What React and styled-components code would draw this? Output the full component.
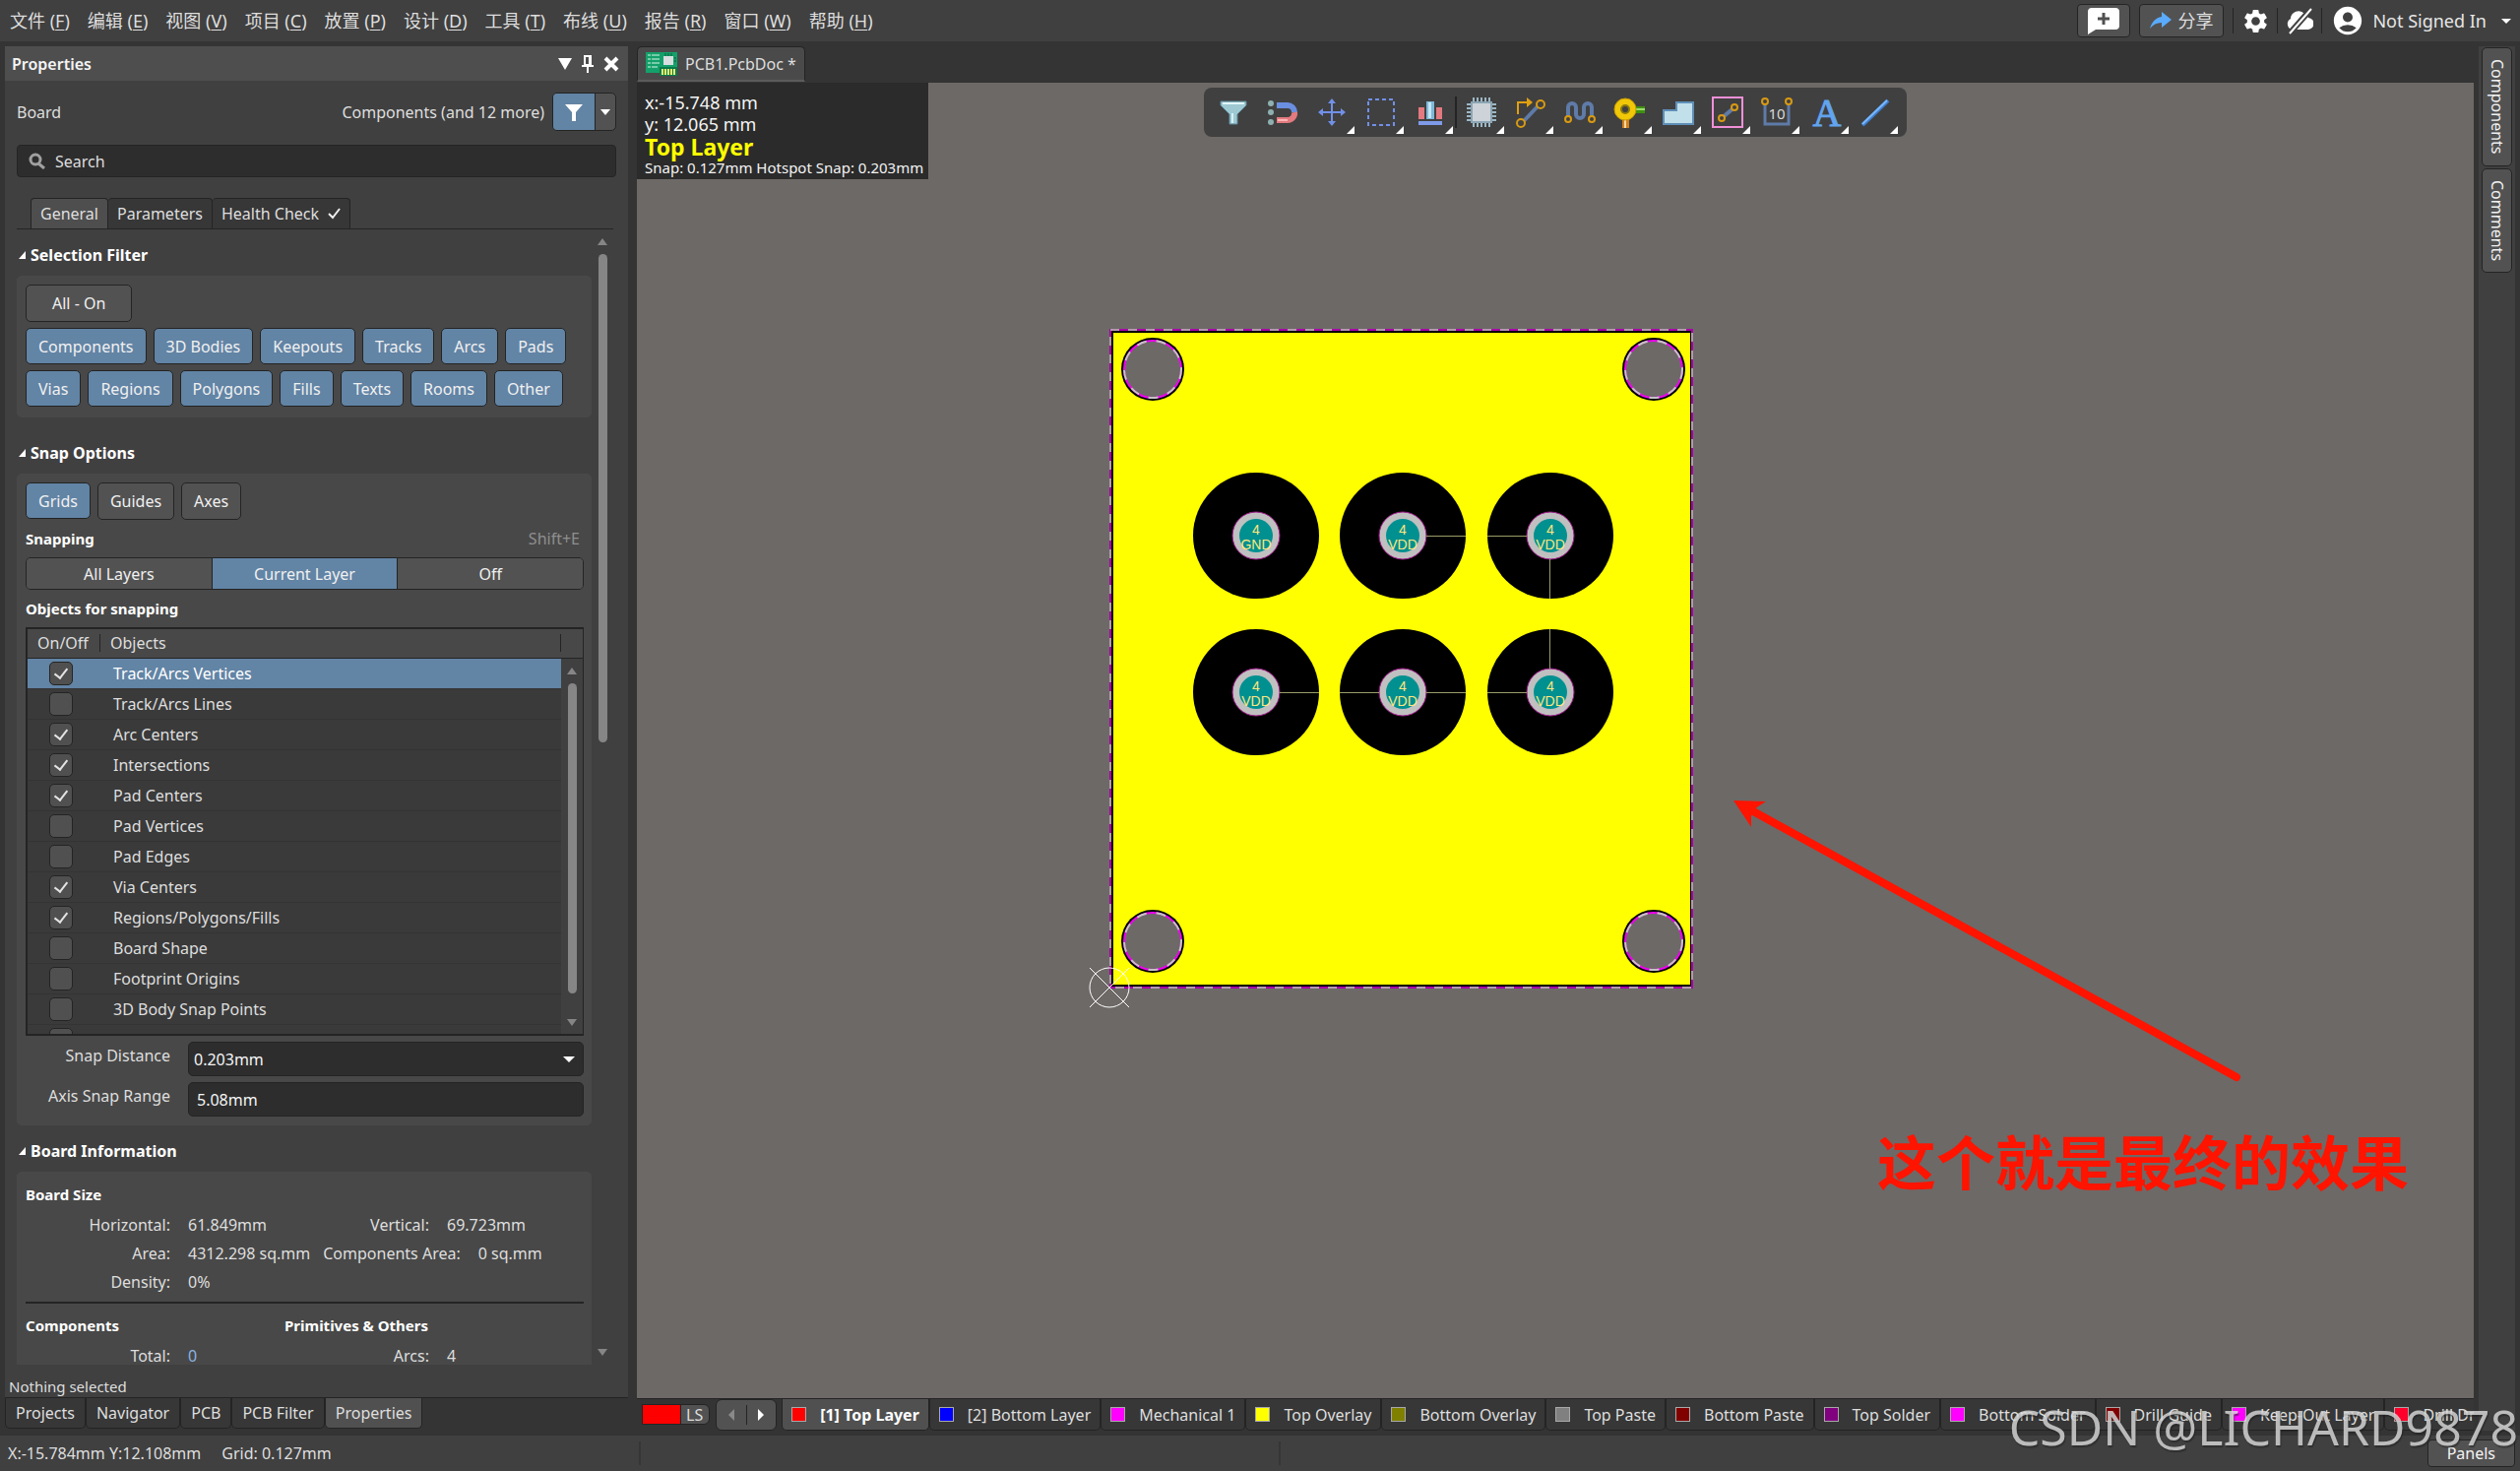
import React from "react";
import styled, { createGlobalStyle, css } from "styled-components";
import { MdSettings, MdAccountCircle } from "react-icons/md";

const colors = {
  frame: "#343434",
  panel: "#404040",
  group: "#484848",
  raised: "#525252",
  field: "#2d2d2d",
  line: "#242424",
  accent: "#6284a5",
  text: "#dedede",
  scroll: "#868686",
  canvas: "#6d6967"
};

const GlobalStyle = createGlobalStyle`
  * {
    box-sizing: border-box;
  }

  body {
    margin: 0;
    background: ${colors.frame};
    color: ${colors.text};
    font-family: "Noto Sans", "Noto Sans CJK SC", sans-serif;
    font-size: 16px;
    line-height: 24px;
  }

  button, input, select {
    font: inherit;
    color: inherit;
  }

  button {
    margin: 0;
    padding: 0;
    border: 0;
    background: none;
    white-space: nowrap;
  }

  svg {
    display: block;
  }
`;

const Page = styled.div`
  display: flex;
  flex-direction: column;
  height: 100vh;
  overflow: hidden;
  position: relative;
`;

/* ---------- menu bar ---------- */

const MenuBar = styled.header`
  display: flex;
  flex: 0 0 42px;
  align-items: center;
  justify-content: space-between;
  background: ${colors.panel};
`;

const MenuList = styled.nav`
  display: flex;
  gap: 18px;
  padding-left: 10px;
`;

const MenuItem = styled.button`
  font-size: 18px;

  u {
    text-decoration-thickness: 1px;
    text-underline-offset: 2px;
  }
`;

const MenuActions = styled.div`
  display: flex;
  align-items: center;
  gap: 9px;
  padding-right: 9px;
`;

const ActionButton = styled.button`
  display: flex;
  align-items: center;
  justify-content: center;
  gap: 6px;
  height: 34px;
  padding: 0 10px;
  border: 1px solid ${colors.line};
  border-radius: 4px;
  background: ${colors.raised};
  font-size: 18px;
`;

const IconButton = styled.button`
  display: flex;
  align-items: center;
  justify-content: center;
  width: 34px;
  height: 34px;
  margin: 0 -4px;
  color: #fff;
`;

const ActionDivider = styled.span`
  width: 1px;
  height: 26px;
  background: ${colors.line};
`;

const Account = styled.button`
  display: flex;
  align-items: center;
  gap: 8px;
  font-size: 18px;
  color: #e6e6e6;

  span {
    padding-right: 7px;
  }
`;

const Caret = styled.i`
  width: 0;
  height: 0;
  border: ${p => p.$size || 5}px solid transparent;
  border-bottom-width: 0;
  border-top: ${p => (p.$size || 5) + (p.$tall || 0)}px solid
    ${p => p.$color || "#fff"};
`;

/* ---------- work area ---------- */

const Main = styled.main`
  display: flex;
  flex: 1;
  min-height: 0;
`;

const Panel = styled.aside`
  display: flex;
  flex: 0 0 633px;
  flex-direction: column;
  margin: 5px 9px 7px 5px;
`;

const PanelHeader = styled.div`
  display: flex;
  flex: 0 0 35px;
  align-items: center;
  gap: 10px;
  padding: 0 9px 0 7px;
  background: #4e4e4e;
`;

const PanelTitle = styled.h1`
  flex: 1;
  margin: 0;
  font-size: 16px;
  font-weight: 600;
  color: #f4f4f4;
`;

const PanelBody = styled.div`
  display: flex;
  flex: 1;
  flex-direction: column;
  min-height: 0;
  padding: 12px 12px 0;
  background: ${colors.panel};
`;

const ObjectRow = styled.div`
  display: flex;
  flex: 0 0 39px;
  align-items: center;
  justify-content: space-between;
`;

const FilterControl = styled.div`
  display: flex;
  align-items: center;
  gap: 8px;
`;

const SplitButton = styled.div`
  display: flex;
  height: 39px;
  border: 1px solid ${colors.line};
  border-radius: 5px;
  overflow: hidden;
  background: ${colors.raised};
`;

const SplitPart = styled.button`
  display: flex;
  align-items: center;
  justify-content: center;
  width: ${p => (p.$main ? 43 : 20)}px;
  background: ${p => (p.$main ? colors.accent : "none")};
  border-right: ${p => (p.$main ? `1px solid ${colors.line}` : "0")};
`;

const SearchBox = styled.label`
  display: flex;
  flex: 0 0 33px;
  align-items: center;
  gap: 10px;
  margin: 14px 0 21px;
  padding: 0 11px;
  border: 1px solid ${colors.line};
  border-radius: 4px;
  background: ${colors.field};

  input {
    flex: 1;
    border: 0;
    padding: 0;
    background: none;
    outline: none;
  }

  input::placeholder {
    color: ${colors.text};
    opacity: 1;
  }
`;

const TabList = styled.div`
  display: flex;
  flex: 0 0 32px;
  margin-right: 3px;
  padding-left: 14px;
  border-bottom: 1px solid ${colors.line};
`;

const Tab = styled.button`
  display: flex;
  align-items: center;
  gap: 9px;
  padding: 0 9px;
  border: 1px solid ${colors.line};
  border-bottom: 0;
  border-radius: 4px 4px 0 0;
  background: ${p => (p.$active ? "#4e4e4e" : "#373737")};

  & + & {
    border-left: 0;
  }
`;

const ScrollArea = styled.div`
  display: flex;
  flex: 1;
  gap: 6px;
  min-height: 0;
  padding-right: 9px;
`;

const ScrollContent = styled.div`
  flex: 1;
  overflow: hidden;
`;

const ScrollBar = styled.div`
  display: flex;
  flex: 0 0 ${p => p.$width || 9}px;
  flex-direction: column;
  align-items: center;
  padding: 9px 0;
`;

const ScrollTrack = styled.div`
  flex: 1;
  align-self: stretch;
  padding: 9px 0;
`;

const ScrollThumb = styled.div`
  width: 9px;
  height: ${p => p.$height};
  margin: 0 auto;
  border-radius: 5px;
  background: ${colors.scroll};
`;

const ScrollArrow = styled(Caret).attrs({ $size: 5, $tall: 2, $color: colors.scroll })`
  transform: ${p => (p.$up ? "rotate(180deg)" : "none")};
`;

const SectionTitle = styled.h2`
  display: flex;
  align-items: center;
  gap: 5px;
  margin: 14px 0 9px;
  padding-left: 2px;
  font-size: 16px;
  font-weight: 700;
  line-height: 24px;
  color: #fff;
`;

const Fold = styled.span`
  width: 0;
  height: 0;
  border-left: 7px solid transparent;
  border-bottom: 8px solid #fff;
`;

const Group = styled.section`
  padding: 9px 8px 9px 9px;
  margin-bottom: ${p => p.$after || 0}px;
  border-radius: 5px;
  background: ${colors.group};
`;

const ChipRow = styled.div`
  display: flex;
  gap: 7px;
  margin-bottom: ${p => (p.$last ? 2 : 6)}px;
`;

const Chip = styled.button`
  height: ${p => (p.$on ? 37 : 38)}px;
  padding: 0 ${p => (p.$wide ? 26 : 12)}px;
  border: 1px solid ${colors.line};
  border-radius: 5px;
  background: ${p => (p.$on ? colors.accent : colors.raised)};
  color: #f0f0f0;
`;

const SubTitle = styled.h3`
  display: flex;
  justify-content: space-between;
  flex: 1;
  margin: ${p => p.$margin || "7px 0"};
  font-size: 15px;
  font-weight: 700;
  line-height: 24px;
  color: #fff;

  small {
    padding-right: 4px;
    font-size: 16px;
    font-weight: 400;
    color: #8f8f8f;
  }
`;

const Segmented = styled.div`
  display: flex;
  height: 33px;
  border: 1px solid ${colors.line};
  border-radius: 5px;
  overflow: hidden;
`;

const Segment = styled.button`
  flex: 1;
  background: ${p => (p.$on ? colors.accent : colors.raised)};
  color: #f0f0f0;

  & + & {
    border-left: 1px solid ${colors.line};
  }
`;

const ListFrame = styled.div`
  border: 2px solid ${colors.line};
  border-right-width: 1px;
`;

const ListViewport = styled.div`
  display: flex;
  height: 411px;
  overflow: hidden;
  background: #3a3a3a;
`;

const ListTable = styled.table`
  flex: 1;
  align-self: flex-start;
  border-collapse: collapse;

  th {
    height: 29px;
    padding: 0 0 0 10px;
    border-bottom: 1px solid ${colors.line};
    background: ${colors.group};
    font-weight: 400;
    text-align: left;
  }

  th:first-child {
    width: 74px;
    background: linear-gradient(${colors.line}, ${colors.line}) right center / 1px 18px
      no-repeat ${colors.group};
  }

  th:last-child {
    background: linear-gradient(${colors.line}, ${colors.line}) right center / 1px 18px
      no-repeat ${colors.group};
  }
`;

const ListRow = styled.tr`
  height: 31px;
  background: ${p => (p.$selected ? colors.accent : "none")};
  color: ${p => (p.$selected ? "#fff" : colors.text)};

  td {
    padding: 0 0 0 13px;
    border-bottom: 1px solid #343434;
  }

  td:first-child {
    padding-left: 22px;
  }

  label {
    display: block;
  }
`;

const CheckBox = styled.input`
  appearance: none;
  display: flex;
  justify-content: center;
  width: 24px;
  height: 24px;
  margin: 0;
  border: 1px solid ${colors.line};
  border-radius: 5px;
  background: #505050;

  &:checked::after {
    content: "";
    width: 6px;
    height: 11px;
    margin-top: 3px;
    border: solid #e4e4e4;
    border-width: 0 2px 2px 0;
    transform: rotate(38deg);
  }
`;

const ListScroll = styled.div`
  display: flex;
  flex: 0 0 22px;
  flex-direction: column;
  background: ${colors.panel};

  &::before {
    content: "";
    flex: 0 0 29px;
    border-bottom: 1px solid ${colors.line};
    background: ${colors.group};
  }
`;

const Field = styled.div`
  display: grid;
  grid-template-columns: 147px 1fr;
  gap: 18px;
  margin-top: 6px;

  > label {
    padding-top: 2px;
    text-align: right;
  }
`;

const inputLook = css`
  width: 100%;
  height: 35px;
  padding: 0 8px;
  border: 1px solid ${colors.line};
  border-radius: 5px;
  background: ${colors.field};
  color: #f4f4f4;
  outline: none;
`;

const TextInput = styled.input`
  ${inputLook}
`;

const SelectBox = styled.div`
  position: relative;

  select {
    ${inputLook}
    padding: 0 5px;
    appearance: none;
  }

  ${Caret} {
    position: absolute;
    right: 9px;
    top: 15px;
    pointer-events: none;
  }
`;

const Stats = styled.dl`
  display: flex;
  margin: 0;
  line-height: 29px;

  dt {
    min-width: 147px;
    padding-left: 13px;
    text-align: right;
  }

  dd {
    min-width: 116px;
    margin: 0;
    padding-left: 18px;
  }
`;

const CountLink = styled.a`
  color: #8ab4e0;
  text-decoration: none;
`;

const Rule = styled.hr`
  height: 2px;
  margin: 5px 0 10px;
  border: 0;
  background: ${colors.line};
`;

const HeadingPair = styled.div`
  display: grid;
  grid-template-columns: 263px 1fr;
`;

const PanelFooter = styled.p`
  flex: 0 0 33px;
  margin: 0 -8px;
  padding-top: 12px;
  font-size: 15px;
  line-height: 20px;
`;

const PanelTabs = styled.div`
  display: flex;
  flex: 0 0 32px;
  border-top: 1px solid ${colors.line};
`;

const PanelTab = styled.button`
  padding: 0 10px;
  border: 1px solid ${colors.line};
  border-top: 0;
  border-radius: 0 0 5px 5px;
  background: ${p => (p.$active ? "#505050" : "#373737")};
`;

/* ---------- editor ---------- */

const Editor = styled.section`
  display: flex;
  flex: 1;
  flex-direction: column;
  min-width: 0;
`;

const DocTabs = styled.div`
  display: flex;
  flex: 0 0 42px;
  padding: 5px 0 1px;
`;

const DocTab = styled.button`
  display: flex;
  align-items: center;
  gap: 8px;
  padding: 0 8px;
  border: 1px solid ${colors.line};
  border-bottom: 2px solid #5c5c5c;
  border-radius: 5px 5px 0 0;
  background: #4a4a4a;
`;

const Canvas = styled.div`
  position: relative;
  flex: 1;
  min-height: 0;
  overflow: hidden;
  background: ${colors.canvas};

  > svg {
    width: 100%;
    height: 100%;
  }
`;

const HeadsUp = styled.div`
  position: absolute;
  left: 0;
  top: 0;
  padding: 9px 5px 3px 8px;
  background: #2b2b2b;
  color: #f4f4f4;
  font-size: 18px;
  line-height: 22px;

  p {
    margin: 0;
  }

  strong {
    display: block;
    font-size: 23px;
    line-height: 25px;
    color: #ffff00;
  }

  small {
    display: block;
    font-size: 15px;
    line-height: 17px;
  }
`;

const ToolBar = styled.div`
  position: absolute;
  left: 576px;
  top: 5px;
  display: flex;
  align-items: center;
  height: 50px;
  padding: 0 7px 0 5px;
  border-radius: 8px;
  background: ${colors.panel};
`;

const Tool = styled.button`
  position: relative;
  display: flex;
  align-items: center;
  justify-content: center;
  width: 50px;
  height: 50px;

  &::after {
    content: "";
    display: ${p => (p.$menu ? "block" : "none")};
    position: absolute;
    right: 2px;
    bottom: 3px;
    border-left: 8px solid transparent;
    border-bottom: 8px solid #fff;
  }
`;

const ToolDivider = styled.span`
  width: 2px;
  height: 32px;
  background: ${colors.line};
`;

const LayerBar = styled.div`
  display: flex;
  flex: 0 0 38px;
  padding: 0 0 5px 5px;
  border-top: 1px solid ${colors.line};
  overflow: hidden;
`;

const LayerSet = styled.button`
  display: flex;
  flex: none;
  height: 21px;
  margin: 5px 6px 0 0;
  border: 1px solid ${colors.line};
  border-radius: 0 6px 6px 0;
  background: ${colors.raised};
  line-height: 20px;

  &::before {
    content: "";
    width: 38px;
    align-self: stretch;
    margin-right: 5px;
    border-right: 1px solid ${colors.line};
    background: #ff0000;
  }

  span {
    padding-right: 6px;
  }
`;

const LayerNav = styled.div`
  display: flex;
  flex: none;
  align-items: center;
  width: 62px;
  margin-right: 5px;
  border: 1px solid ${colors.line};
  border-radius: 6px;
  background: ${colors.raised};

  button {
    display: flex;
    flex: 1;
    justify-content: center;
  }

  button + button {
    border-left: 1px solid ${colors.line};
    padding: 4px 0;
  }
`;

const LayerTab = styled.button`
  display: flex;
  flex: none;
  align-items: center;
  gap: 14px;
  padding: 0 9px;
  border: 1px solid ${colors.line};
  border-top: 0;
  border-radius: 0 0 5px 5px;
  background: ${p => (p.$active ? "#505050" : "#373737")};
  font-weight: ${p => (p.$active ? 700 : 400)};
  color: ${p => (p.$active ? "#fff" : colors.text)};
`;

const Swatch = styled.span`
  width: 15px;
  height: 15px;
  border: 1px solid #a8a8a8;
  background: ${p => p.$color};
`;

const SideStrip = styled.aside`
  display: flex;
  flex: 0 0 37px;
  flex-direction: column;
  gap: 2px;
  margin: 5px 5px 5px;
  padding: 1px 3px;
  background: ${colors.panel};
`;

const SideTab = styled.button`
  display: flex;
  align-items: center;
  padding: 11px 2px;
  border: 1px solid ${colors.line};
  border-radius: 5px;
  background: ${colors.raised};
  color: #f0f0f0;
  writing-mode: vertical-rl;
`;

/* ---------- status bar ---------- */

const StatusBar = styled.footer`
  display: flex;
  flex: 0 0 36px;
  align-items: center;
  padding: 0 5px 0 8px;
  background: ${colors.panel};
`;

const StatusText = styled.div`
  display: flex;
  flex: 0 0 641px;
  gap: 21px;
`;

const StatusSlot = styled.div`
  flex: ${p => (p.$grow ? "1" : "0 0 650px")};
  height: 24px;
  border-left: 2px solid #363636;
`;

const PanelsButton = styled.button`
  height: 28px;
  padding: 0 19px;
  border: 1px solid ${colors.line};
  border-radius: 4px;
  background: ${colors.raised};
  color: #f4f4f4;
`;

const Watermark = styled.div`
  position: absolute;
  right: 2px;
  bottom: 15px;
  font-size: 50px;
  line-height: 60px;
  color: rgba(222, 222, 222, 0.8);
  text-shadow: 1px 2px 1px rgba(30, 30, 30, 0.5);
  pointer-events: none;
  white-space: nowrap;
`;

/* ---------- icons ---------- */

const Icon = ({ w = 32, h = 32, children, ...rest }) => (
  <svg width={w} height={h} viewBox={`0 0 ${w} ${h}`} fill="none" aria-hidden="true" {...rest}>
    {children}
  </svg>
);

const tools = [
  {
    name: "Filter",
    art: (
      <>
        <path d="M3 5h26v4l-9 9v10h-8V18L3 9z" fill="#9ec9d3" stroke="#5e8a9a" />
        <path d="M5 6h22v2H5z" fill="#e4f6fa" />
        <path d="M14 17h2v10h-2z" fill="#d6f0f5" />
      </>
    )
  },
  {
    name: "Snapping",
    art: (
      <>
        <circle cx="4" cy="7" r="3" fill="#8fb0b0" />
        <circle cx="4" cy="16" r="3" fill="#8fb0b0" />
        <circle cx="4" cy="26" r="3" fill="#8fb0b0" />
        <path d="M10 9h11a7 7 0 0 1 7 7" stroke="#6b8fe0" strokeWidth="6" />
        <path d="M10 24h11a7 7 0 0 0 7-8" stroke="#e27a7f" strokeWidth="6" />
        <path d="M11 24h10" stroke="#ffb5b5" strokeWidth="2" />
      </>
    )
  },
  {
    name: "Move",
    menu: true,
    art: (
      <>
        <path d="M16 5v22M5 16h22" stroke="#7190e8" strokeWidth="2" />
        <path d="M16 2l4 5h-8zM16 30l4-5h-8zM2 16l5-4v8zM30 16l-5-4v8z" fill="#7190e8" />
      </>
    )
  },
  {
    name: "Select",
    menu: true,
    art: <rect x="3" y="3" width="26" height="26" stroke="#7190e8" strokeWidth="2" strokeDasharray="4 3" />
  },
  {
    name: "Align",
    menu: true,
    art: (
      <>
        <rect x="4" y="11" width="6" height="12" fill="#e27a7f" />
        <rect x="12" y="5" width="8" height="18" fill="#7fb8d8" />
        <rect x="14" y="6" width="3" height="16" fill="#c4e6f4" />
        <rect x="22" y="11" width="6" height="12" fill="#e27a7f" />
        <rect x="4" y="25" width="24" height="4" fill="#7f9be8" />
      </>
    )
  },
  {
    name: "Component",
    menu: true,
    divider: true,
    art: (
      <>
        <path
          d="M8 1v30M12 1v30M16 1v30M20 1v30M24 1v30M1 8h30M1 12h30M1 16h30M1 20h30M1 24h30"
          stroke="#9db8c4"
          strokeWidth="2"
        />
        <rect x="5" y="5" width="22" height="22" fill="#8ba5b4" />
        <rect x="7" y="7" width="18" height="18" fill="#cdd3d8" />
      </>
    )
  },
  {
    name: "Route",
    menu: true,
    art: (
      <>
        <path d="M8 26L25 8" stroke="#5f7ba8" strokeWidth="4" />
        <path d="M3 18V6h12" stroke="#e0a010" strokeWidth="2" />
        <path d="M12 1l6 5-6 5z" fill="#e0a010" />
        <circle cx="26" cy="8" r="4" fill="#404040" stroke="#d89a12" strokeWidth="2" />
        <circle cx="6" cy="27" r="4" fill="#404040" stroke="#d89a12" strokeWidth="2" />
      </>
    )
  },
  {
    name: "Length tuning",
    menu: true,
    art: (
      <>
        <path
          d="M4 20V11a4 4 0 0 1 8 0v7a4 4 0 0 0 8 0v-7a4 4 0 0 1 8 0v9"
          stroke="#5f7ba8"
          strokeWidth="4"
        />
        <circle cx="4" cy="23" r="3" fill="#404040" stroke="#d89a12" strokeWidth="2" />
        <circle cx="28" cy="23" r="3" fill="#404040" stroke="#d89a12" strokeWidth="2" />
      </>
    )
  },
  {
    name: "Via",
    menu: true,
    art: (
      <>
        <path d="M18 10h14v7H18z" fill="#3f9010" />
        <path d="M22 12h10v2H22z" fill="#9cdc70" />
        <path d="M9 22h7v10H9z" fill="#d08020" />
        <path d="M11 22h2v10h-2z" fill="#ffd9a0" />
        <circle cx="12" cy="13" r="11" fill="#f0c808" stroke="#c89a00" />
        <circle cx="12" cy="13" r="4" fill="#404040" stroke="#8a7a10" strokeWidth="2" />
      </>
    )
  },
  {
    name: "Polygon",
    menu: true,
    art: <path d="M1 28V14h13V6h17v22z" fill="#c2e0ea" stroke="#5f8fb8" strokeWidth="2" />
  },
  {
    name: "Room",
    menu: true,
    art: (
      <>
        <rect x="1" y="1" width="30" height="30" stroke="#f090d8" strokeWidth="2" />
        <path d="M10 22L23 11" stroke="#5f7ba8" strokeWidth="4" />
        <circle cx="23" cy="11" r="3" fill="#404040" stroke="#d89a12" strokeWidth="2" />
        <circle cx="10" cy="22" r="3" fill="#404040" stroke="#d89a12" strokeWidth="2" />
      </>
    )
  },
  {
    name: "Dimension",
    menu: true,
    art: (
      <>
        <path d="M4 6v22h24V6" stroke="#5f7ba8" strokeWidth="3" />
        <text x="16" y="23" fill="#d8d8d8" fontSize="15" textAnchor="middle" fontFamily="Noto Sans">
          10
        </text>
        <circle cx="4" cy="5" r="3" fill="#404040" stroke="#d89a12" strokeWidth="2" />
        <circle cx="28" cy="5" r="3" fill="#404040" stroke="#d89a12" strokeWidth="2" />
      </>
    )
  },
  {
    name: "Text",
    menu: true,
    art: (
      <text
        x="17"
        y="30"
        fill="#62a4ee"
        fontSize="40"
        fontWeight="400"
        stroke="#62a4ee"
        textAnchor="middle"
        fontFamily="Liberation Serif"
      >
        A
      </text>
    )
  },
  {
    name: "Line",
    menu: true,
    art: (
      <>
        <path d="M3 29L29 4" stroke="#3f7ed0" strokeWidth="4" />
        <path d="M3 28L28 4" stroke="#7ab8f8" strokeWidth="2" />
      </>
    )
  }
];

const FunnelIcon = () => (
  <Icon w={18} h={18}>
    <path d="M0 1h18l-7 8v9H7V9z" fill="#fff" />
  </Icon>
);

const PinIcon = () => (
  <Icon w={12} h={18}>
    <path d="M3 1h6v9H3zM0 11h12M6 11v7" stroke="#fff" strokeWidth="2" />
    <path d="M7 1h2v9H7z" fill="#fff" />
  </Icon>
);

const CloseIcon = () => (
  <Icon w={16} h={16}>
    <path d="M2 2l12 12M14 2L2 14" stroke="#fff" strokeWidth="4" />
  </Icon>
);

const SearchIcon = () => (
  <Icon w={17} h={17}>
    <circle cx="7" cy="7" r="5" stroke="#a0a0a0" strokeWidth="3" />
    <path d="M10 11l6 5" stroke="#a0a0a0" strokeWidth="3" />
  </Icon>
);

const CheckIcon = () => (
  <Icon w={13} h={12}>
    <path d="M1 6l4 4 7-9" stroke="#eee" strokeWidth="2" />
  </Icon>
);

const CommentIcon = () => (
  <Icon w={32} h={27}>
    <path d="M4 0h24a4 4 0 0 1 4 4v14a4 4 0 0 1-4 4H8l-8 5V4a4 4 0 0 1 4-4z" fill="#fff" />
    <path d="M16 5v12M10 11h12" stroke="#505050" strokeWidth="3" />
  </Icon>
);

const ShareIcon = () => (
  <Icon w={22} h={18}>
    <path d="M12 0l10 8-10 8v-5C7 11 3 13 0 17 2 10 6 6 12 5z" fill="#5aabff" />
  </Icon>
);

const CloudOffIcon = () => (
  <Icon w={28} h={28}>
    <path
      d="M6 23a6 6 0 0 1-1-11 8 8 0 0 1 14-5 7 7 0 0 1 4 4 6 6 0 0 1-1 12z"
      fill="#fff"
    />
    <path d="M3 28L25 3" stroke="#404040" strokeWidth="6" />
    <path d="M4 27L26 2" stroke="#fff" strokeWidth="2" />
  </Icon>
);

const DocIcon = () => (
  <Icon w={32} h={24}>
    <rect width="32" height="21" fill="#14a06a" />
    <path d="M2 3h3M2 7h3M2 11h3M2 15h3M6 3h8M6 7h8M6 11h8M6 15h6" stroke="#d8f8e8" />
    <rect x="18" y="4" width="10" height="9" fill="#d8dde0" />
    <path d="M20 1v3M23 1v3M26 1v3M29 6h2M29 9h2" stroke="#07603c" />
    <rect x="14" y="15" width="18" height="9" fill="#0a7a4c" />
    <path d="M17 17v6M20 17v6M23 17v6M26 17v6M29 17v6" stroke="#f4f070" strokeWidth="2" />
  </Icon>
);

/* ---------- board drawing ---------- */

const holes = [[524, 291], [1033, 291], [524, 872], [1033, 872]];

const pads = [
  { x: 629, y: 460, net: "GND" },
  { x: 778, y: 460, net: "VDD" },
  { x: 928, y: 460, net: "VDD" },
  { x: 629, y: 619, net: "VDD" },
  { x: 778, y: 619, net: "VDD" },
  { x: 928, y: 619, net: "VDD" }
];

// unrouted connections, only visible inside the pad clearances
const rats = [
  "M802 460.5H842M864 460.5H904",
  "M653 619.5H693M714 619.5H754M802 619.5H842M864 619.5H904",
  "M927.5 484V524M927.5 555V595"
];

const Board = () => (
  <svg viewBox="0 0 1866 1336" preserveAspectRatio="xMinYMin meet" fill="none">
    <rect x="481" y="252" width="591" height="667" fill="#000" />
    <rect x="484" y="254" width="586" height="662" fill="#ffff00" />
    <rect x="481" y="251" width="591" height="668" stroke="#a800a8" strokeWidth="2" />
    <rect x="481" y="251" width="591" height="668" stroke="#b49ab0" strokeWidth="2" strokeDasharray="9 9" />
    {holes.map(([x, y]) => (
      <g key={`${x}-${y}`}>
        <circle cx={x} cy={y} r="32" fill="#000" />
        <circle cx={x} cy={y} r="29" fill={colors.canvas} stroke="#f000f0" strokeWidth="2" />
        <circle cx={x} cy={y} r="29" stroke="#c4c4c4" strokeWidth="2" strokeDasharray="10 10" />
      </g>
    ))}
    {pads.map(pad => (
      <g key={`${pad.x}-${pad.y}`}>
        <circle cx={pad.x} cy={pad.y} r="64" fill="#000" />
        <circle cx={pad.x} cy={pad.y} r="24" fill="#c0c0c0" stroke="#a0188c" />
        <circle cx={pad.x} cy={pad.y} r="17" fill="#009090" />
        <PadText x={pad.x} y={pad.y - 1}>4</PadText>
        <PadText x={pad.x} y={pad.y + 14}>{pad.net}</PadText>
      </g>
    ))}
    {rats.map(d => (
      <path key={d} d={d} stroke="#9a9c68" />
    ))}
    <circle cx="480" cy="919" r="20" stroke="#fff" />
    <path d="M460 899l40 40M500 899l-40 40" stroke="#fff" />
    <path d="M1134 740L1625 1010" stroke="#ff1400" strokeWidth="8" strokeLinecap="round" />
    <path d="M1114 729l33 1-11 7-4 8v11z" fill="#ff1400" />
    <Note x="1260" y="1120">这个就是最终的效果</Note>
  </svg>
);

const PadText = styled.text`
  fill: #ffe680;
  font-family: "Liberation Sans", sans-serif;
  font-size: 14px;
  text-anchor: middle;
`;

const Note = styled.text`
  fill: #ff1400;
  font-family: "Noto Sans CJK SC", sans-serif;
  font-size: 60px;
  font-weight: 700;
`;

/* ---------- data ---------- */

const menus = [
  ["文件", "F"],
  ["编辑", "E"],
  ["视图", "V"],
  ["项目", "C"],
  ["放置", "P"],
  ["设计", "D"],
  ["工具", "T"],
  ["布线", "U"],
  ["报告", "R"],
  ["窗口", "W"],
  ["帮助", "H"]
];

const filters = [
  ["Components", "3D Bodies", "Keepouts", "Tracks", "Arcs", "Pads"],
  ["Vias", "Regions", "Polygons", "Fills", "Texts", "Rooms", "Other"]
];

const snapObjects = [
  ["Track/Arcs Vertices", true],
  ["Track/Arcs Lines", false],
  ["Arc Centers", true],
  ["Intersections", true],
  ["Pad Centers", true],
  ["Pad Vertices", false],
  ["Pad Edges", false],
  ["Via Centers", true],
  ["Regions/Polygons/Fills", true],
  ["Board Shape", false],
  ["Footprint Origins", false],
  ["3D Body Snap Points", false],
  ["", false]
];

const layers = [
  ["[1] Top Layer", "#ff0000"],
  ["[2] Bottom Layer", "#0000ff"],
  ["Mechanical 1", "#ff00ff"],
  ["Top Overlay", "#ffff00"],
  ["Bottom Overlay", "#808000"],
  ["Top Paste", "#808080"],
  ["Bottom Paste", "#800000"],
  ["Top Solder", "#800080"],
  ["Bottom Solder", "#ff00ff"],
  ["Drill Guide", "#800000"],
  ["Keep-Out Layer", "#ff00ff"],
  ["Drill Drawing", "#ff002a"]
];

const panelTabs = ["Projects", "Navigator", "PCB", "PCB Filter", "Properties"];

/* ---------- sections ---------- */

const TopMenu = () => (
  <MenuBar>
    <MenuList>
      {menus.map(([label, key]) => (
        <MenuItem key={key}>
          {label} (<u>{key}</u>)
        </MenuItem>
      ))}
    </MenuList>
    <MenuActions>
      <ActionButton aria-label="Comment">
        <CommentIcon />
      </ActionButton>
      <ActionButton>
        <ShareIcon />
        分享
      </ActionButton>
      <ActionDivider />
      <IconButton aria-label="Settings">
        <MdSettings size={29} />
      </IconButton>
      <ActionDivider />
      <IconButton aria-label="Offline">
        <CloudOffIcon />
      </IconButton>
      <ActionDivider />
      <Account>
        <MdAccountCircle size={34} color="#fff" />
        <span>Not Signed In</span>
        <Caret />
      </Account>
    </MenuActions>
  </MenuBar>
);

const SnapList = () => (
  <ListFrame>
    <ListViewport>
      <ListTable>
        <thead>
          <tr>
            <th>On/Off</th>
            <th>Objects</th>
          </tr>
        </thead>
        <tbody>
          {snapObjects.map(([name, on], i) => (
            <ListRow key={i} $selected={i === 0}>
              <td>
                <CheckBox
                  type="checkbox"
                  id={`snap-${i}`}
                  defaultChecked={on}
                  aria-label={name || "Other"}
                />
              </td>
              <td>
                <label htmlFor={`snap-${i}`}>{name}</label>
              </td>
            </ListRow>
          ))}
        </tbody>
      </ListTable>
      <ListScroll>
        <ScrollBar $width={382}>
          <ScrollArrow $up />
          <ScrollTrack>
            <ScrollThumb $height="95%" />
          </ScrollTrack>
          <ScrollArrow />
        </ScrollBar>
      </ListScroll>
    </ListViewport>
  </ListFrame>
);

const BoardInfo = () => (
  <Group>
    <SubTitle $margin="2px 0 5px">Board Size</SubTitle>
    <Stats>
      <dt>Horizontal:</dt>
      <dd>61.849mm</dd>
      <dt>Vertical:</dt>
      <dd>69.723mm</dd>
    </Stats>
    <Stats>
      <dt>Area:</dt>
      <dd>4312.298 sq.mm</dd>
      <dt>Components Area:</dt>
      <dd>0 sq.mm</dd>
    </Stats>
    <Stats>
      <dt>Density:</dt>
      <dd>0%</dd>
    </Stats>
    <Rule />
    <HeadingPair>
      <SubTitle $margin="0 0 5px">Components</SubTitle>
      <SubTitle $margin="0 0 5px">Primitives &amp; Others</SubTitle>
    </HeadingPair>
    <Stats>
      <dt>Total:</dt>
      <dd>
        <CountLink href="#components">0</CountLink>
      </dd>
      <dt>Arcs:</dt>
      <dd>4</dd>
    </Stats>
  </Group>
);

const PropertiesPanel = () => (
  <Panel>
    <PanelHeader>
      <PanelTitle>Properties</PanelTitle>
      <Caret $size={7} $tall={5} />
      <PinIcon />
      <CloseIcon />
    </PanelHeader>
    <PanelBody>
      <ObjectRow>
        <span>Board</span>
        <FilterControl>
          <span>Components (and 12 more)</span>
          <SplitButton>
            <SplitPart $main aria-label="Filter">
              <FunnelIcon />
            </SplitPart>
            <SplitPart aria-label="Filter options">
              <Caret $tall={1} />
            </SplitPart>
          </SplitButton>
        </FilterControl>
      </ObjectRow>
      <SearchBox>
        <SearchIcon />
        <input type="text" placeholder="Search" aria-label="Search" />
      </SearchBox>
      <TabList>
        <Tab $active>General</Tab>
        <Tab>Parameters</Tab>
        <Tab>
          Health Check
          <CheckIcon />
        </Tab>
      </TabList>
      <ScrollArea>
        <ScrollContent>
          <SectionTitle>
            <Fold />
            Selection Filter
          </SectionTitle>
          <Group $after={24}>
            <ChipRow>
              <Chip $wide>All - On</Chip>
            </ChipRow>
            {filters.map((row, i) => (
              <ChipRow key={i} $last={i === filters.length - 1}>
                {row.map(name => (
                  <Chip key={name} $on>
                    {name}
                  </Chip>
                ))}
              </ChipRow>
            ))}
          </Group>
          <SectionTitle>
            <Fold />
            Snap Options
          </SectionTitle>
          <Group>
            <ChipRow>
              <Chip $on>Grids</Chip>
              <Chip>Guides</Chip>
              <Chip>Axes</Chip>
            </ChipRow>
            <SubTitle>
              Snapping <small>Shift+E</small>
            </SubTitle>
            <Segmented>
              <Segment>All Layers</Segment>
              <Segment $on>Current Layer</Segment>
              <Segment>Off</Segment>
            </Segmented>
            <SubTitle>Objects for snapping</SubTitle>
            <SnapList />
            <Field>
              <label htmlFor="snap-distance">Snap Distance</label>
              <SelectBox>
                <select id="snap-distance" defaultValue="0.203mm">
                  <option>0.203mm</option>
                </select>
                <Caret $size={6} />
              </SelectBox>
            </Field>
            <Field>
              <label htmlFor="axis-range">Axis Snap Range</label>
              <TextInput id="axis-range" defaultValue="5.08mm" />
            </Field>
          </Group>
          <SectionTitle>
            <Fold />
            Board Information
          </SectionTitle>
          <BoardInfo />
        </ScrollContent>
        <ScrollBar>
          <ScrollArrow $up />
          <ScrollTrack>
            <ScrollThumb $height="45%" />
          </ScrollTrack>
          <ScrollArrow />
        </ScrollBar>
      </ScrollArea>
      <PanelFooter>Nothing selected</PanelFooter>
    </PanelBody>
    <PanelTabs>
      {panelTabs.map(name => (
        <PanelTab key={name} $active={name === "Properties"}>
          {name}
        </PanelTab>
      ))}
    </PanelTabs>
  </Panel>
);

const PcbEditor = () => (
  <Editor>
    <DocTabs>
      <DocTab>
        <DocIcon />
        PCB1.PcbDoc *
      </DocTab>
    </DocTabs>
    <Canvas>
      <Board />
      <HeadsUp>
        <p>x:-15.748 mm</p>
        <p>y: 12.065 mm</p>
        <strong>Top Layer</strong>
        <small>Snap: 0.127mm Hotspot Snap: 0.203mm</small>
      </HeadsUp>
      <ToolBar>
        {tools.map(tool => (
          <React.Fragment key={tool.name}>
            {tool.divider && <ToolDivider />}
            <Tool $menu={tool.menu} aria-label={tool.name}>
              <Icon>{tool.art}</Icon>
            </Tool>
          </React.Fragment>
        ))}
      </ToolBar>
    </Canvas>
    <LayerBar>
      <LayerSet>
        <span>LS</span>
      </LayerSet>
      <LayerNav>
        <button aria-label="Previous layer">
          <Icon w={6} h={12}>
            <path d="M6 0v12L0 6z" fill="#8a8a8a" />
          </Icon>
        </button>
        <button aria-label="Next layer">
          <Icon w={6} h={12}>
            <path d="M0 0v12l6-6z" fill="#fff" />
          </Icon>
        </button>
      </LayerNav>
      {layers.map(([name, color], i) => (
        <LayerTab key={name} $active={i === 0}>
          <Swatch $color={color} />
          {name}
        </LayerTab>
      ))}
    </LayerBar>
  </Editor>
);

const App = () => (
  <Page>
    <GlobalStyle />
    <TopMenu />
    <Main>
      <PropertiesPanel />
      <PcbEditor />
      <SideStrip>
        <SideTab>Components</SideTab>
        <SideTab>Comments</SideTab>
      </SideStrip>
    </Main>
    <StatusBar>
      <StatusText>
        <span>X:-15.784mm Y:12.108mm</span>
        <span>Grid: 0.127mm</span>
      </StatusText>
      <StatusSlot />
      <StatusSlot $grow />
      <PanelsButton>Panels</PanelsButton>
    </StatusBar>
    <Watermark>CSDN @LICHARD9878</Watermark>
  </Page>
);

export default App;
